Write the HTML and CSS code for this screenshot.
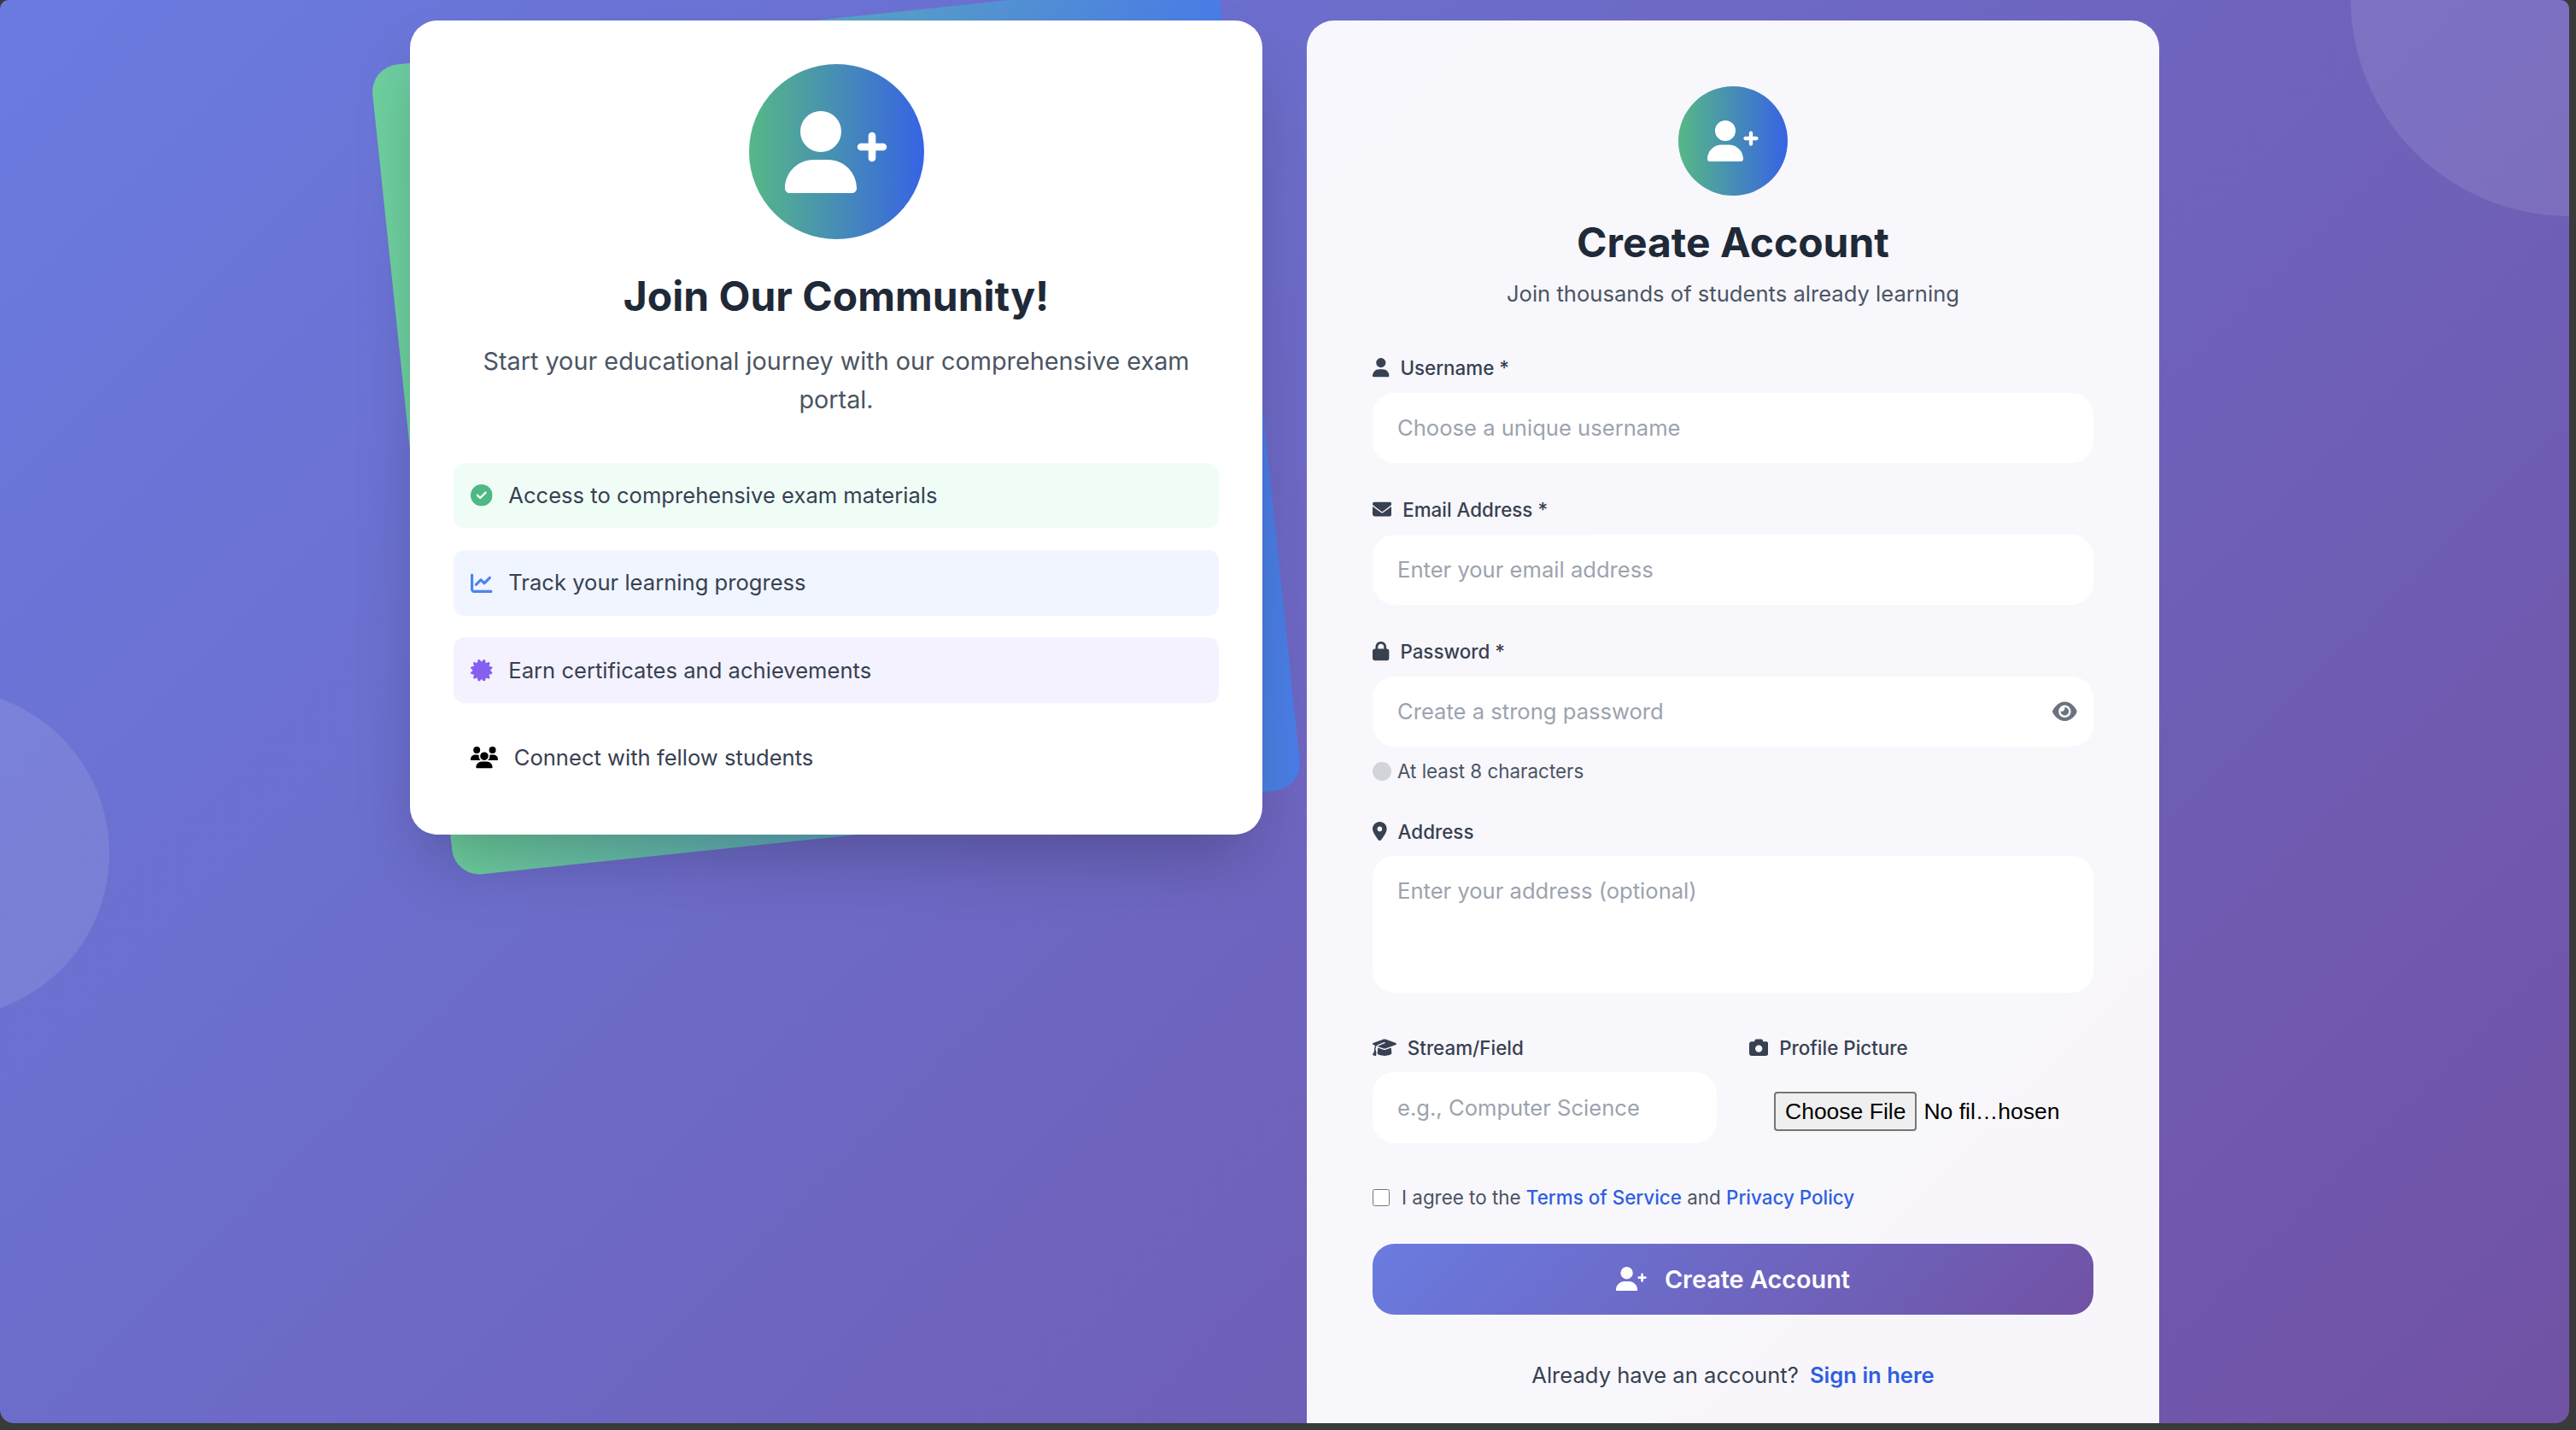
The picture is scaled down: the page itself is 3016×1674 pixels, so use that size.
FILE: index.html
```html
<!DOCTYPE html>
<html lang="en">
<head>
<meta charset="utf-8">
<title>Create Account</title>
<link rel="stylesheet" href="styles.css">
</head>
<body>
<svg class="sprite" aria-hidden="true">
  <symbol id="i-user-plus" viewBox="0 0 640 512"><path d="M96 128a128 128 0 1 1 256 0A128 128 0 1 1 96 128zM0 482.300C0 383.800 79.800 304 178.300 304h91.400C368.200 304 448 383.800 448 482.300c0 16.400-13.300 29.700-29.700 29.700H29.700C13.300 512 0 498.700 0 482.300zM521 293V247H475c-12.700 0-23-10.300-23-23s10.300-23 23-23h46V155c0-12.700 10.300-23 23-23s23 10.300 23 23v46h46c12.700 0 23 10.300 23 23s-10.300 23-23 23H567v46c0 12.700-10.300 23-23 23s-23-10.300-23-23z"/></symbol>
  <symbol id="i-check" viewBox="0 0 512 512"><path d="M256 512A256 256 0 1 0 256 0a256 256 0 1 0 0 512zM369 209L241 337c-9.400 9.400-24.600 9.400-33.900 0l-64-64c-9.400-9.400-9.400-24.600 0-33.900s24.600-9.400 33.900 0l47 47L335 175c9.400-9.400 24.600-9.400 33.900 0s9.400 24.600 0 33.900z"/></symbol>
  <symbol id="i-chart" viewBox="0 0 512 512"><path d="M64 64c0-17.700-14.300-32-32-32S0 46.300 0 64V400c0 44.200 35.800 80 80 80H480c17.700 0 32-14.300 32-32s-14.300-32-32-32H80c-8.800 0-16-7.200-16-16V64zm406.600 86.600c12.500-12.500 12.500-32.800 0-45.300s-32.800-12.500-45.300 0L320 210.700l-57.400-57.400c-12.500-12.500-32.800-12.500-45.300 0l-112 112c-12.500 12.500-12.500 32.800 0 45.300s32.800 12.500 45.300 0L240 221.300l57.400 57.400c12.500 12.500 32.800 12.500 45.300 0l128-128z"/></symbol>
  <symbol id="i-cert" viewBox="0 0 512 512"><path d="M211 7.300C205 1 196-1.400 187.600 .8s-14.900 8.900-17.100 17.300L154.700 80.600l-62-17.500c-8.400-2.400-17.400 0-23.500 6.100s-8.500 15.100-6.100 23.500l17.500 62L18.100 170.600c-8.400 2.100-15 8.700-17.300 17.100S1 205 7.300 211l46.200 45L7.300 301C1 307-1.400 316 .8 324.400s8.900 14.900 17.300 17.100l62.500 15.800-17.500 62c-2.400 8.400 0 17.400 6.100 23.500s15.100 8.500 23.500 6.100l62-17.500 15.800 62.500c2.100 8.400 8.700 15 17.100 17.300s17.300-.2 23.400-6.400l45-46.200 45 46.200c6.100 6.200 15 8.700 23.400 6.400s14.900-8.900 17.100-17.300l15.800-62.500 62 17.500c8.400 2.400 17.400 0 23.500-6.100s8.500-15.100 6.100-23.500l-17.500-62 62.500-15.800c8.400-2.100 15-8.700 17.300-17.100s-.2-17.400-6.400-23.400l-46.200-45 46.200-45c6.200-6.100 8.700-15 6.400-23.400s-8.900-14.900-17.300-17.100l-62.500-15.800 17.500-62c2.400-8.400 0-17.400-6.100-23.500s-15.100-8.500-23.500-6.100l-62 17.500L341.400 18.100c-2.100-8.400-8.700-15-17.100-17.300S307 1 301 7.300L256 53.500 211 7.300z"/></symbol>
  <symbol id="i-users" viewBox="0 0 640 512"><path d="M144 0a80 80 0 1 1 0 160A80 80 0 1 1 144 0zM512 0a80 80 0 1 1 0 160A80 80 0 1 1 512 0zM0 298.700C0 239.800 47.800 192 106.700 192h42.700c15.900 0 31 3.500 44.600 9.700c-1.300 7.200-1.900 14.700-1.900 22.300c0 38.200 16.800 72.500 43.300 96c-.2 0-.4 0-.7 0H21.300C9.600 320 0 310.400 0 298.700zM405.300 320c-.2 0-.4 0-.7 0c26.600-23.500 43.300-57.800 43.300-96c0-7.600-.7-15-1.900-22.300c13.600-6.300 28.700-9.700 44.600-9.700h42.700C592.200 192 640 239.800 640 298.700c0 11.800-9.600 21.300-21.300 21.300H405.300zM224 224a96 96 0 1 1 192 0 96 96 0 1 1 -192 0zM128 485.300C128 411.700 187.700 352 261.300 352H378.700C452.300 352 512 411.700 512 485.300c0 14.700-11.900 26.700-26.700 26.700H154.700c-14.700 0-26.700-11.900-26.700-26.700z"/></symbol>
  <symbol id="i-user" viewBox="0 0 448 512"><path d="M224 256A128 128 0 1 0 224 0a128 128 0 1 0 0 256zm-45.700 48C79.800 304 0 383.800 0 482.300C0 498.700 13.300 512 29.700 512H418.300c16.400 0 29.700-13.300 29.700-29.700C448 383.800 368.200 304 269.700 304H178.300z"/></symbol>
  <symbol id="i-envelope" viewBox="0 0 512 512"><path d="M48 64C21.500 64 0 85.500 0 112c0 15.100 7.100 29.300 19.200 38.400L236.800 313.600c11.400 8.500 27 8.500 38.400 0L492.800 150.400c12.100-9.100 19.200-23.300 19.200-38.400c0-26.500-21.500-48-48-48H48zM0 176V384c0 35.300 28.700 64 64 64H448c35.300 0 64-28.700 64-64V176L294.400 339.200c-22.800 17.100-54 17.100-76.800 0L0 176z"/></symbol>
  <symbol id="i-lock" viewBox="0 0 448 512"><path d="M144 144v48H304V144c0-44.200-35.800-80-80-80s-80 35.800-80 80zM80 192V144C80 64.500 144.500 0 224 0s144 64.500 144 144v48h16c35.300 0 64 28.700 64 64V448c0 35.300-28.700 64-64 64H64c-35.300 0-64-28.700-64-64V256c0-35.300 28.700-64 64-64H80z"/></symbol>
  <symbol id="i-eye" viewBox="0 0 576 512"><path d="M288 32c-80.800 0-145.500 36.800-192.600 80.600C48.600 156 17.300 208 2.500 243.700c-3.300 7.900-3.300 16.700 0 24.600C17.300 304 48.600 356 95.400 399.400C142.500 443.200 207.200 480 288 480s145.500-36.800 192.600-80.600c46.800-43.500 78.100-95.400 93-131.100c3.300-7.900 3.300-16.700 0-24.600c-14.900-35.700-46.200-87.700-93-131.100C433.500 68.800 368.800 32 288 32zM144 256a144 144 0 1 1 288 0 144 144 0 1 1 -288 0zm144-64c0 35.300-28.700 64-64 64c-7.100 0-13.900-1.200-20.300-3.300c-5.500-1.800-11.900 1.600-11.700 7.400c.3 6.900 1.300 13.800 3.200 20.700c13.700 51.200 66.400 81.600 117.600 67.900s81.600-66.400 67.900-117.600c-11.100-41.500-47.800-69.400-88.600-71.100c-5.800-.2-9.200 6.100-7.400 11.700c2.100 6.400 3.300 13.200 3.300 20.300z"/></symbol>
  <symbol id="i-pin" viewBox="0 0 384 512"><path d="M215.700 499.200C267 435 384 279.400 384 192C384 86 298 0 192 0S0 86 0 192c0 87.400 117 243 168.300 307.200c12.300 15.300 35.100 15.300 47.400 0zM192 128a64 64 0 1 1 0 128 64 64 0 1 1 0-128z"/></symbol>
  <symbol id="i-cap" viewBox="0 0 640 512"><path d="M320 32c-8.100 0-16.100 1.400-23.700 4.100L15.800 137.400C6.300 140.900 0 149.900 0 160s6.300 19.100 15.800 22.600l57.900 20.900C57.300 229.300 48 259.800 48 291.900v28.100c0 28.400-10.800 57.700-22.300 80.800c-6.500 13-13.900 25.800-22.500 37.600C0 442.700-.9 448.300 .9 453.400s6 8.900 11.200 10.200l64 16c4.200 1.100 8.700 .3 12.400-2s6.300-6.100 7.100-10.400c8.600-42.800 4.300-81.200-2.100-108.700C90.300 344.300 86 329.800 80 316.500V291.900c0-30.200 10.200-58.700 27.900-81.500c12.900-15.500 29.600-28 49.200-35.700l157-61.700c8.200-3.200 17.500 .8 20.700 9s-.8 17.500-9 20.700l-157 61.700c-12.400 4.900-23.300 12.400-32.200 21.600l159.600 57.600c7.600 2.700 15.600 4.100 23.700 4.100s16.100-1.400 23.700-4.100L624.200 182.600c9.500-3.400 15.800-12.500 15.800-22.600s-6.300-19.100-15.800-22.600L343.700 36.100C336.100 33.400 328.100 32 320 32zM128 408c0 35.300 86 72 192 72s192-36.700 192-72L496.700 262.600 354.500 314c-11.100 4-22.800 6-34.500 6s-23.500-2-34.500-6L143.300 262.600 128 408z"/></symbol>
  <symbol id="i-camera" viewBox="0 0 512 512"><path d="M149.100 64.800L138.700 96H64C28.700 96 0 124.700 0 160V416c0 35.300 28.700 64 64 64H448c35.300 0 64-28.700 64-64V160c0-35.300-28.700-64-64-64H373.300L362.900 64.800C356.400 45.200 338.100 32 317.400 32H194.600c-20.700 0-39 13.200-45.500 32.800zM256 192a96 96 0 1 1 0 192 96 96 0 1 1 0-192z"/></symbol>
</svg>

<div class="window">
  <div class="blob blob-tr"></div>
  <div class="blob blob-l"></div>

  <main class="layout">
    <section class="promo-wrap">
      <div class="promo-back"></div>
      <div class="promo">
        <div class="avatar avatar-lg"><svg class="avatar-lg-icon"><use href="#i-user-plus"/></svg></div>
        <h2 class="promo-title">Join Our Community!</h2>
        <p class="promo-text">Start your educational journey with our comprehensive exam portal.</p>
        <ul class="perks">
          <li class="perk perk-green"><svg class="perk-icon ic-green"><use href="#i-check"/></svg><span>Access to comprehensive exam materials</span></li>
          <li class="perk perk-blue"><svg class="perk-icon ic-blue"><use href="#i-chart"/></svg><span>Track your learning progress</span></li>
          <li class="perk perk-purple"><svg class="perk-icon ic-purple"><use href="#i-cert"/></svg><span>Earn certificates and achievements</span></li>
          <li class="perk"><svg class="perk-icon perk-icon-wide"><use href="#i-users"/></svg><span>Connect with fellow students</span></li>
        </ul>
      </div>
    </section>

    <section class="signup">
      <header class="signup-head">
        <div class="avatar avatar-sm"><svg class="avatar-sm-icon"><use href="#i-user-plus"/></svg></div>
        <h1 class="signup-title">Create Account</h1>
        <p class="signup-sub">Join thousands of students already learning</p>
      </header>
      <form class="form">
        <div class="field">
          <label class="label"><svg class="lab-icon w-user"><use href="#i-user"/></svg>Username *</label>
          <input class="input" type="text" placeholder="Choose a unique username">
        </div>
        <div class="field">
          <label class="label"><svg class="lab-icon w-env"><use href="#i-envelope"/></svg>Email Address *</label>
          <input class="input" type="email" placeholder="Enter your email address">
        </div>
        <div class="field">
          <label class="label"><svg class="lab-icon w-user"><use href="#i-lock"/></svg>Password *</label>
          <div class="pw-wrap">
            <input class="input" type="password" placeholder="Create a strong password">
            <svg class="eye"><use href="#i-eye"/></svg>
          </div>
          <div class="hint"><span class="dot"></span>At least 8 characters</div>
        </div>
        <div class="field field-addr">
          <label class="label"><svg class="lab-icon w-pin"><use href="#i-pin"/></svg>Address</label>
          <textarea class="input textarea" placeholder="Enter your address (optional)"></textarea>
        </div>
        <div class="two-col">
          <div class="field">
            <label class="label"><svg class="lab-icon w-cap"><use href="#i-cap"/></svg>Stream/Field</label>
            <input class="input" type="text" placeholder="e.g., Computer Science">
          </div>
          <div class="field">
            <label class="label"><svg class="lab-icon w-env"><use href="#i-camera"/></svg>Profile Picture</label>
            <input class="file" type="file">
          </div>
        </div>
        <label class="terms"><input class="check" type="checkbox"><span>I agree to the <a class="link" href="#">Terms of Service</a> and <a class="link" href="#">Privacy Policy</a></span></label>
        <button class="submit" type="button"><svg class="submit-icon"><use href="#i-user-plus"/></svg>Create Account</button>
        <p class="signin">Already have an account? <a class="link link-strong" href="#">Sign in here</a></p>
      </form>
    </section>
  </main>
</div>
</body>
</html>
```
FILE: styles.css
```css
* { box-sizing: border-box; }
html, body { margin: 0; padding: 0; height: 100%; }
body {
  background: #3a3a3a;
  font-family: Inter, "Noto Sans", sans-serif;
  color: #374151;
  overflow: hidden;
}
.sprite { display: none; }

.window {
  position: relative;
  width: 3008px;
  height: 1666px;
  overflow: hidden;
  border-radius: 10px 10px 16px 16px;
  background: linear-gradient(135deg, #6a7be0 0%, #7152a4 100%);
}
.blob { position: absolute; border-radius: 50%; background: rgba(255, 255, 255, .1); }
.blob-tr { width: 512px; height: 512px; left: 2752px; top: -259px; }
.blob-l { width: 384px; height: 384px; left: -256px; top: 807px; }

.layout {
  position: relative;
  display: grid;
  grid-template-columns: 998px 998px;
  column-gap: 52px;
  justify-content: center;
  align-items: start;
  padding-top: 24px;
}

/* left column */
.promo-wrap { position: relative; }
.promo-back {
  position: absolute;
  inset: 0;
  border-radius: 32px;
  transform: rotate(-6deg);
  background: linear-gradient(90deg, #6ed09e, #4a7de6);
}
.promo {
  position: relative;
  background: #fff;
  border-radius: 32px;
  padding: 51.2px;
  box-shadow: 0 40px 80px -19px rgba(0, 0, 0, .25);
  text-align: center;
}
.avatar {
  display: flex;
  align-items: center;
  justify-content: center;
  border-radius: 50%;
  background: linear-gradient(90deg, #56b886, #3763e4);
  margin: 0 auto;
  fill: #fff;
}
.avatar-lg { width: 205px; height: 205px; }
.avatar-lg-icon { width: 120px; height: 96px; }
.avatar-sm { width: 128px; height: 128px; }
.avatar-sm-icon { width: 60px; height: 48px; }
.promo-title {
  margin: 33px 0 0;
  font-size: 48px;
  line-height: 68px;
  font-weight: 700;
  color: #1f2937;
}
.promo-text {
  margin: 18.5px 0 0;
  font-size: 28.8px;
  line-height: 45px;
  color: #4b5563;
}
.perks {
  list-style: none;
  margin: 52px 0 0;
  padding: 0;
  display: flex;
  flex-direction: column;
  gap: 25.6px;
}
.perk {
  display: flex;
  align-items: center;
  gap: 18.5px;
  height: 76.8px;
  padding: 0 20px;
  border-radius: 12.8px;
  font-size: 25.6px;
  text-align: left;
  color: #374151;
}
.perk span { position: relative; top: -.5px; }
.perk-green { background: #f0fdf7; }
.perk-blue { background: #f0f5ff; }
.perk-purple { background: #f4f2fe; }
.perk-icon { width: 25.6px; height: 25.6px; flex: none; fill: #000; }
.perk-icon-wide { width: 32px; }
.ic-green { fill: #4fb885; }
.ic-blue { fill: #4f83ee; }
.ic-purple { fill: #8560f0; }

/* right column */
.signup {
  background: rgba(255, 255, 255, .95);
  border-radius: 32px;
  padding: 77px 77px 51px;
  height: 1700px;
}
.signup-head { text-align: center; }
.signup-title {
  margin: 26px 0 0;
  font-size: 48px;
  line-height: 58px;
  font-weight: 700;
  color: #1f2937;
}
.signup-sub {
  margin: 9px 0 0;
  font-size: 25.6px;
  line-height: 44px;
  color: #4b5563;
}
.form { margin-top: 50px; }
.field { display: flex; flex-direction: column; margin-bottom: 40px; }
.label {
  display: flex;
  align-items: center;
  height: 29px;
  margin-bottom: 14.5px;
  font-size: 22.4px;
  font-weight: 500;
  color: #374151;
}
.lab-icon { height: 22.4px; fill: #374151; margin-right: 12.8px; flex: none; }
.w-user { width: 19.6px; }
.w-env { width: 22.4px; }
.w-pin { width: 16.8px; }
.w-cap { width: 28px; }
.input {
  display: block;
  width: 100%;
  height: 82.5px;
  border: 0;
  outline: 0;
  border-radius: 25.6px;
  background: #fff;
  padding: 0 29px;
  font-family: inherit;
  font-size: 25.6px;
  color: #374151;
}
.input::placeholder { color: #9ca3af; opacity: 1; }
.textarea { height: 160px; padding-top: 25px; resize: none; }
.pw-wrap { position: relative; }
.eye { position: absolute; right: 19px; top: 28px; width: 28.8px; height: 25.6px; fill: #6b7280; }
.hint {
  display: flex;
  align-items: center;
  gap: 7px;
  margin-top: 15.5px;
  font-size: 22.4px;
  line-height: 26px;
  color: #4b5563;
}
.dot { width: 22px; height: 22px; border-radius: 50%; background: #d1d5db; }
.field-addr { margin-top: 43px; margin-bottom: 49.5px; }
.field:has(.hint) { margin-bottom: 0; }
.two-col {
  display: grid;
  grid-template-columns: 402.5px 402.5px;
  column-gap: 38.5px;
}
.file {
  margin-top: 23px;
  height: 46px;
  padding: 0 38px 0 29px;
  font-family: "Liberation Sans", sans-serif;
  font-size: 26.5px;
  color: #000;
  width: 402px;
}
.file::file-selector-button {
  height: 46px;
  font: inherit;
  margin: 0 8px 0 0;
  padding: 0 11px;
  border: 2px solid #767676;
  border-radius: 4px;
  background: #efefef;
  color: #000;
}
.terms {
  display: flex;
  align-items: center;
  gap: 14px;
  font-size: 22.4px;
  line-height: 32px;
  color: #4b5563;
  margin-top: 8.5px;
}
.check { width: 20px; height: 20px; margin: 0; flex: none; }
.link { color: #2f5fe0; text-decoration: none; font-weight: 500; }
.submit {
  display: flex;
  align-items: center;
  justify-content: center;
  gap: 20.8px;
  width: 100%;
  height: 83px;
  margin-top: 37.5px;
  border: 0;
  border-radius: 25.6px;
  background: linear-gradient(135deg, #6a7be0, #7152a4);
  color: #fff;
  font-family: inherit;
  font-size: 28.8px;
  font-weight: 600;
}
.submit-icon { width: 36px; height: 28.8px; fill: #fff; }
.signin {
  margin: 51px 0 0;
  text-align: center;
  font-size: 25.6px;
  line-height: 40px;
  color: #374151;
}
.link-strong { font-weight: 600; margin-left: 6px; }
```
